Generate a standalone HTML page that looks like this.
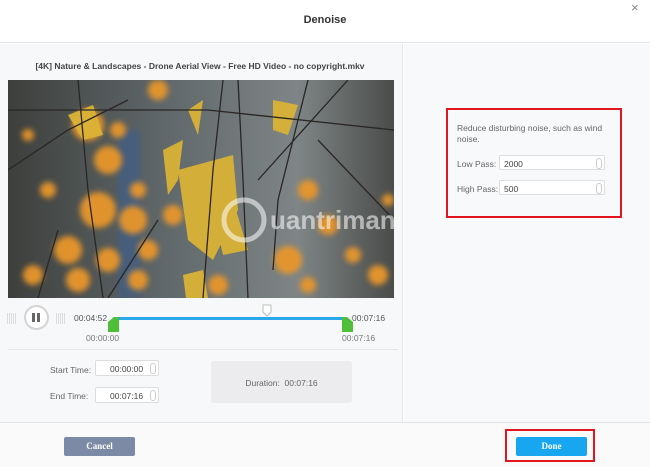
<!DOCTYPE html>
<html><head><meta charset="utf-8"><style>
*{margin:0;padding:0;box-sizing:border-box}
body{width:650px;height:467px;overflow:hidden;background:#fff;font-family:"Liberation Sans",sans-serif;position:relative;color:#555}
.abs{position:absolute}
.t{font-size:8.5px;color:#666}
.inp{position:absolute;background:#fff;border:1px solid #dcdde0;border-radius:2px;font-size:8.5px;color:#444}
.spin{position:absolute;right:2px;top:2px;width:6px;height:11px;border:1px solid #ccc;border-radius:3px}
</style></head><body>
<div class="abs" style="left:0;top:0;width:650px;height:43px;background:#fff;border-bottom:1px solid #e3e4e7"></div>
<div class="abs" style="left:0;top:14px;width:650px;text-align:center;font-weight:bold;font-size:11px;color:#333">Denoise</div>
<div class="abs" style="left:631px;top:0px;font-size:13px;color:#888">×</div>
<div class="abs" style="left:0;top:44px;width:403px;height:378px;background:#f7f8fa;border-right:1px solid #e6e7ea"></div>
<div class="abs" style="left:404px;top:44px;width:246px;height:378px;background:#f8f9fb"></div>
<div class="abs" style="left:0;top:61px;width:400px;text-align:center;font-weight:bold;font-size:8.5px;color:#444">[4K] Nature &amp; Landscapes - Drone Aerial View - Free HD Video - no copyright.mkv</div>
<svg class="abs" style="left:8px;top:80px" width="386" height="218" viewBox="0 0 386 218">
<defs><linearGradient id="g" x1="0" x2="1"><stop offset="0" stop-color="#3d3f3c"/><stop offset=".4" stop-color="#5f676a"/><stop offset=".75" stop-color="#7f8586"/><stop offset="1" stop-color="#4a4c4a"/></linearGradient>
<filter id="b"><feGaussianBlur stdDeviation="3"/></filter></defs>
<rect width="386" height="218" fill="url(#g)"/>
<rect x="110" y="50" width="22" height="168" fill="#3f5f88" opacity=".7" filter="url(#b)"/>
<g fill="#e8962a" filter="url(#b)" opacity=".95">
<circle cx="80" cy="45" r="16"/><circle cx="100" cy="80" r="14"/><circle cx="90" cy="130" r="18"/><circle cx="125" cy="140" r="14"/><circle cx="25" cy="195" r="10"/><circle cx="70" cy="200" r="12"/><circle cx="130" cy="200" r="10"/><circle cx="300" cy="110" r="10"/><circle cx="320" cy="145" r="10"/><circle cx="280" cy="180" r="14"/><circle cx="370" cy="195" r="10"/><circle cx="300" cy="205" r="8"/><circle cx="380" cy="120" r="6"/><circle cx="150" cy="10" r="10"/>
<circle cx="60" cy="170" r="14"/><circle cx="100" cy="180" r="12"/><circle cx="40" cy="110" r="8"/><circle cx="130" cy="110" r="8"/><circle cx="140" cy="170" r="10"/><circle cx="110" cy="50" r="8"/><circle cx="20" cy="55" r="6"/><circle cx="345" cy="175" r="8"/><circle cx="210" cy="205" r="10"/><circle cx="165" cy="135" r="10"/>
</g>
<g fill="#d9b236" opacity=".95">
<path d="M155 70 L175 60 L170 100 L160 115Z"/><path d="M170 90 L225 75 L230 130 L205 180 L180 160Z"/><path d="M180 30 L195 20 L190 55Z"/><path d="M265 20 L290 25 L280 55 L265 50Z"/><path d="M175 195 L195 190 L200 218 L178 218Z"/><path d="M200 110 L225 120 L240 170 L215 175Z"/><path d="M60 35 L85 25 L95 55 L75 60Z"/>
</g>
<g stroke="#2a2624" stroke-width="1.3" fill="none">
<path d="M70 0 L80 110 L95 218"/><path d="M215 0 L205 90 L195 218"/><path d="M300 0 L270 120 L265 190"/><path d="M0 90 L60 50 L120 20"/><path d="M340 0 L250 100"/><path d="M150 140 L100 218"/><path d="M0 30 L200 30 L386 50"/><path d="M230 0 L235 100 L240 218"/><path d="M50 150 L30 218"/><path d="M310 60 L386 140"/>
</g>
<text x="262" y="149" font-family="Liberation Sans" font-size="26" font-weight="bold" fill="#fff" opacity=".55">uantrimang</text>
<circle cx="236" cy="140" r="20" fill="none" stroke="#fff" stroke-width="5" opacity=".55"/>
</svg>
<div class="abs" style="left:7px;top:313px;width:9px;height:11px;background:repeating-linear-gradient(90deg,#ddd 0 1px,transparent 1px 2px)"></div>
<div class="abs" style="left:56px;top:313px;width:9px;height:11px;background:repeating-linear-gradient(90deg,#ddd 0 1px,transparent 1px 2px)"></div>
<div class="abs" style="left:24px;top:305px;width:25px;height:25px;border-radius:50%;border:2px solid #d4d4d4;background:#fff"></div>
<div class="abs" style="left:32px;top:313px;width:3px;height:9px;background:#666"></div>
<div class="abs" style="left:37px;top:313px;width:3px;height:9px;background:#666"></div>
<div class="abs t" style="left:74px;top:313px;color:#555">00:04:52</div>
<div class="abs" style="left:118px;top:317px;width:224px;height:3px;background:#2aa6ea"></div>
<svg class="abs" style="left:108px;top:317px" width="12" height="15"><path d="M0 5 L6 0 L11 0 L11 15 L0 15Z" fill="#4fbf3a"/></svg>
<svg class="abs" style="left:342px;top:317px" width="12" height="15"><path d="M0 0 L5 0 L11 5 L11 15 L0 15Z" fill="#4fbf3a"/></svg>
<svg class="abs" style="left:262px;top:304px" width="10" height="13"><path d="M1 1 H9 V8 L5 12 L1 8Z" fill="#fff" stroke="#bbb"/></svg>
<div class="abs t" style="left:86px;top:333px;color:#777">00:00:00</div>
<div class="abs t" style="left:352px;top:313px;color:#555">00:07:16</div>
<div class="abs t" style="left:342px;top:333px;color:#777">00:07:16</div>
<div class="abs" style="left:8px;top:349px;width:390px;height:1px;background:#e6e7ea"></div>
<div class="abs t" style="left:50px;top:365px">Start Time:</div>
<div class="inp" style="left:95px;top:360px;width:64px;height:16px"><span style="position:absolute;left:14px;top:3px">00:00:00</span><div class="spin"></div></div>
<div class="abs t" style="left:50px;top:391px">End Time:</div>
<div class="inp" style="left:95px;top:387px;width:64px;height:16px"><span style="position:absolute;left:14px;top:3px">00:07:16</span><div class="spin"></div></div>
<div class="abs" style="left:211px;top:361px;width:141px;height:42px;background:#ececee;border-radius:3px"></div>
<div class="abs t" style="left:211px;top:378px;width:141px;text-align:center">Duration:&nbsp; 00:07:16</div>
<div class="abs" style="left:0;top:422px;width:650px;height:1px;background:#e3e4e7"></div>
<div class="abs" style="left:0;top:423px;width:650px;height:44px;background:#fafafb"></div>
<div class="abs" style="left:64px;top:437px;width:71px;height:19px;background:#7d8aa6;border-radius:2px;color:#fff;font-weight:bold;font-size:9px;text-align:center;line-height:19px;font-family:'Liberation Serif',serif">Cancel</div>
<div class="abs" style="left:505px;top:429px;width:90px;height:33px;border:2px solid #e3161f"></div>
<div class="abs" style="left:516px;top:437px;width:71px;height:19px;background:#18a6f0;border-radius:2px;color:#fff;font-weight:bold;font-size:9px;text-align:center;line-height:19px;font-family:'Liberation Serif',serif">Done</div>
<div class="abs" style="left:446px;top:108px;width:176px;height:110px;border:2px solid #e3161f;background:#f8f9fb"></div>
<div class="abs t" style="left:457px;top:123px;width:160px;line-height:11px">Reduce disturbing noise, such as wind noise.</div>
<div class="abs t" style="left:457px;top:159px">Low Pass:</div>
<div class="inp" style="left:499px;top:155px;width:106px;height:15px"><span style="position:absolute;left:4px;top:3px">2000</span><div class="spin"></div></div>
<div class="abs t" style="left:457px;top:184px">High Pass:</div>
<div class="inp" style="left:499px;top:180px;width:106px;height:15px"><span style="position:absolute;left:4px;top:3px">500</span><div class="spin"></div></div>
</body></html>
